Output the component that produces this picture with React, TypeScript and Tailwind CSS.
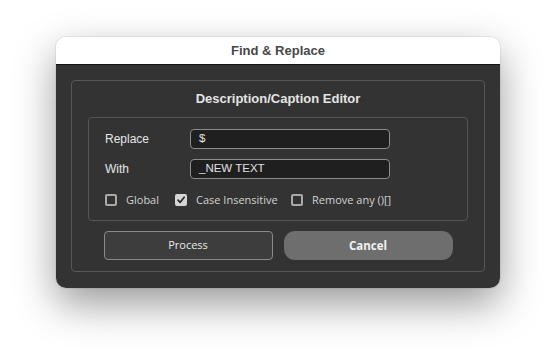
import React from "react";

function Box({ checked }: { checked?: boolean }) {
  if (checked) {
    return (
      <span className="flex h-[12px] w-[12px] shrink-0 items-center justify-center rounded-[2px] bg-[#d6d6d6]">
        <svg width="10" height="10" viewBox="0 0 10 10">
          <path d="M2 5.2 L4.1 7.4 L8.2 2.2" fill="none" stroke="#2b2b2b" strokeWidth="1.7" strokeLinecap="round" strokeLinejoin="round" />
        </svg>
      </span>
    );
  }
  return <span className="block h-[12px] w-[12px] shrink-0 rounded-[2px] border-[2px] border-[#a9a9a9]" />;
}

export default function App() {
  const sans = { fontFamily: '"Liberation Sans", Arial, sans-serif' };
  const clean = { fontFamily: '"Open Sans", "Noto Sans", sans-serif' };
  return (
    <div className="min-h-[362px] w-[556px] bg-white pl-[56px] pt-[37px]">
      <div className="w-[444px] overflow-hidden rounded-[10px] shadow-[0_16px_40px_rgba(0,0,0,0.4),0_0_0_1px_rgba(0,0,0,0.06)]">
        <div className="flex h-[28px] items-center justify-center border-b border-[#141414] bg-white" style={sans}>
          <span className="text-[13px] font-bold text-[#474747]">Find &amp; Replace</span>
        </div>
        <div className="bg-[#333333] px-[15px] pb-[16px] pt-[15px]">
          <div className="rounded-[4px] border border-[#575757] pb-[11px] pt-[10px]">
            <div className="text-center text-[13px] font-bold leading-[16px] text-[#e4e4e4]" style={sans}>
              Description/Caption Editor
            </div>
            <div className="mx-[16px] mt-[10px] rounded-[4px] border border-[#555555] pb-[13px] pl-[16px] pt-[11px]">
              <div className="flex items-center" style={sans}>
                <span className="w-[85px] text-[12px] text-[#e6e6e6]">Replace</span>
                <div className="flex h-[20px] w-[200px] items-center rounded-[4px] border border-[#8c8c8c] bg-[#1f1f1f] pl-[8px] text-[11.5px] text-[#e0e0e0]">
                  $
                </div>
              </div>
              <div className="mt-[10px] flex items-center" style={sans}>
                <span className="w-[85px] text-[12px] text-[#e6e6e6]">With</span>
                <div className="flex h-[20px] w-[200px] items-center rounded-[4px] border border-[#8c8c8c] bg-[#1f1f1f] pl-[8px] text-[11.5px] text-[#e0e0e0]">
                  _NEW TEXT
                </div>
              </div>
              <div className="mt-[14px] flex items-center text-[11px] leading-[14px] text-[#d2d2d2]" style={clean}>
                <Box />
                <span className="ml-[9px] w-[49px]">Global</span>
                <Box checked />
                <span className="ml-[9px] w-[95px]">Case Insensitive</span>
                <Box />
                <span className="ml-[9px]">Remove any ()[]</span>
              </div>
            </div>
            <div className="mt-[10px] flex justify-center gap-[11px]" style={clean}>
              <div className="flex h-[29px] w-[169px] items-center justify-center rounded-[4px] border border-[#8a8a8a] bg-[#3d3d3d] text-[11px] text-[#e8e8e8]">
                Process
              </div>
              <div className="flex h-[29px] w-[169px] items-center justify-center rounded-[11px] bg-[#6e6e6e] text-[11.5px] font-bold text-[#f2f2f2]">
                Cancel
              </div>
            </div>
          </div>
        </div>
      </div>
    </div>
  );
}
